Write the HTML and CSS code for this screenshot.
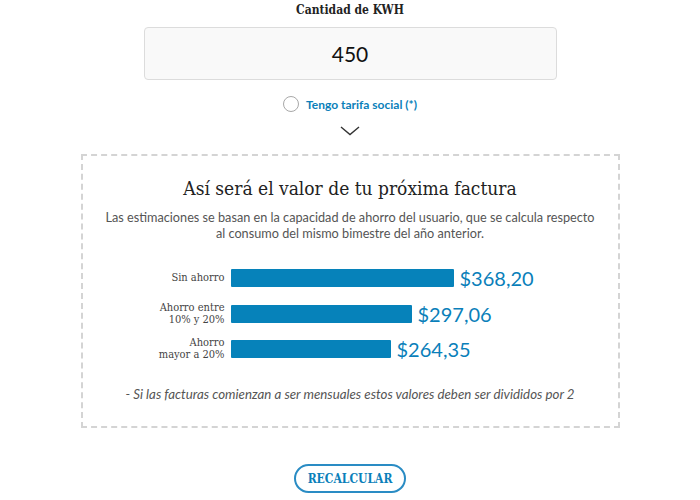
FILE: index.html
```html
<!DOCTYPE html>
<html lang="es">
<head>
<meta charset="utf-8">
<link rel="stylesheet" href="styles.css">
</head>
<body>
<div class="page">
  <div class="kwh-label">Cantidad de KWH</div>
  <div class="kwh-input">450</div>
  <label class="social">
    <span class="radio"></span>
    <span class="social-text">Tengo tarifa social (*)</span>
  </label>
  <div class="chevron">
    <svg width="20" height="10" viewBox="0 0 20 10"><path d="M1 1 L10 8.5 L19 1" fill="none" stroke="#333" stroke-width="1.4"/></svg>
  </div>
  <section class="result">
    <h2 class="result-title">Así será el valor de tu próxima factura</h2>
    <p class="result-desc">Las estimaciones se basan en la capacidad de ahorro del usuario, que se calcula respecto<br>al consumo del mismo bimestre del año anterior.</p>
    <div class="chart">
      <div class="chart-row">
        <div class="chart-label">Sin ahorro</div>
        <div class="chart-bar" style="width:223px"></div>
        <div class="chart-value">$368,20</div>
      </div>
      <div class="chart-row">
        <div class="chart-label">Ahorro entre<br>10% y 20%</div>
        <div class="chart-bar" style="width:181px"></div>
        <div class="chart-value">$297,06</div>
      </div>
      <div class="chart-row">
        <div class="chart-label">Ahorro<br>mayor a 20%</div>
        <div class="chart-bar" style="width:160px"></div>
        <div class="chart-value">$264,35</div>
      </div>
    </div>
    <p class="result-note">- Si las facturas comienzan a ser mensuales estos valores deben ser divididos por 2</p>
  </section>
  <div class="actions">
    <button class="btn-recalc">RECALCULAR</button>
  </div>
</div>
</body>
</html>
```

FILE: styles.css
```css
* { box-sizing: border-box; }
html, body { margin: 0; padding: 0; background: #fff; }
body { font-family: "Lato", "Open Sans", sans-serif; color: #333; }

.page { width: 700px; display: flex; flex-direction: column; align-items: center; }

.kwh-label {
  margin-top: 2px;
  font-family: "DejaVu Serif Condensed", "DejaVu Serif", serif;
  font-stretch: condensed;
  font-weight: bold;
  font-size: 12px;
  line-height: 16px;
  color: #222;
}

.kwh-input {
  margin-top: 9px;
  width: 413px;
  height: 53px;
  border: 1px solid #dcdcdc;
  border-radius: 4px;
  background: #f9f9f9;
  display: flex;
  align-items: center;
  justify-content: center;
  font-family: "Lato", sans-serif;
  font-size: 21px;
  color: #111;
}

.social {
  margin-top: 15px;
  display: flex;
  align-items: center;
  gap: 7px;
  height: 18px;
}
.radio {
  width: 16px;
  height: 16px;
  border: 1px solid #a8a8a8;
  border-radius: 50%;
  background: #fff;
}
.social-text {
  font-family: "Lato", sans-serif;
  font-weight: bold;
  font-size: 12px;
  color: #0a7fba;
}

.chevron { margin-top: 13px; height: 10px; line-height: 0; }

.result {
  margin-top: 18px;
  width: 539px;
  height: 274px;
  border: 2px dashed #d4d4d4;
  display: flex;
  flex-direction: column;
  align-items: center;
}
.result-title {
  margin: 20px 0 0;
  font-family: "DejaVu Serif Condensed", "DejaVu Serif", serif;
  font-stretch: condensed;
  font-weight: normal;
  font-size: 19px;
  line-height: 24px;
  color: #222;
}
.result-desc {
  margin: 9px 0 0;
  font-size: 12.7px;
  line-height: 16px;
  color: #555;
  text-align: center;
}

.chart {
  margin-top: 28px;
  align-self: stretch;
  display: flex;
  flex-direction: column;
  gap: 17.5px;
}
.chart-row {
  display: flex;
  align-items: center;
  height: 18px;
}
.chart-label {
  width: 142px;
  flex: none;
  text-align: right;
  font-family: "DejaVu Serif Condensed", "DejaVu Serif", serif;
  font-stretch: condensed;
  font-size: 11px;
  line-height: 12px;
  color: #444;
}
.chart-bar {
  margin-left: 6px;
  height: 18px;
  background: #0682ba;
  border-radius: 1px;
  flex: none;
}
.chart-value {
  margin-left: 6px;
  font-size: 20px;
  color: #0a7fba;
}

.result-note {
  margin: 28px 0 0;
  font-style: italic;
  font-size: 13.3px;
  color: #555;
}

.actions { margin-top: 36px; }
.btn-recalc {
  width: 112px;
  height: 29px;
  border: 2px solid #2a8cc4;
  border-radius: 15px;
  background: #fff;
  font-family: "DejaVu Serif Condensed", "DejaVu Serif", serif;
  font-stretch: condensed;
  font-weight: bold;
  font-size: 12px;
  color: #0a7fba;
  padding: 0;
}
```
